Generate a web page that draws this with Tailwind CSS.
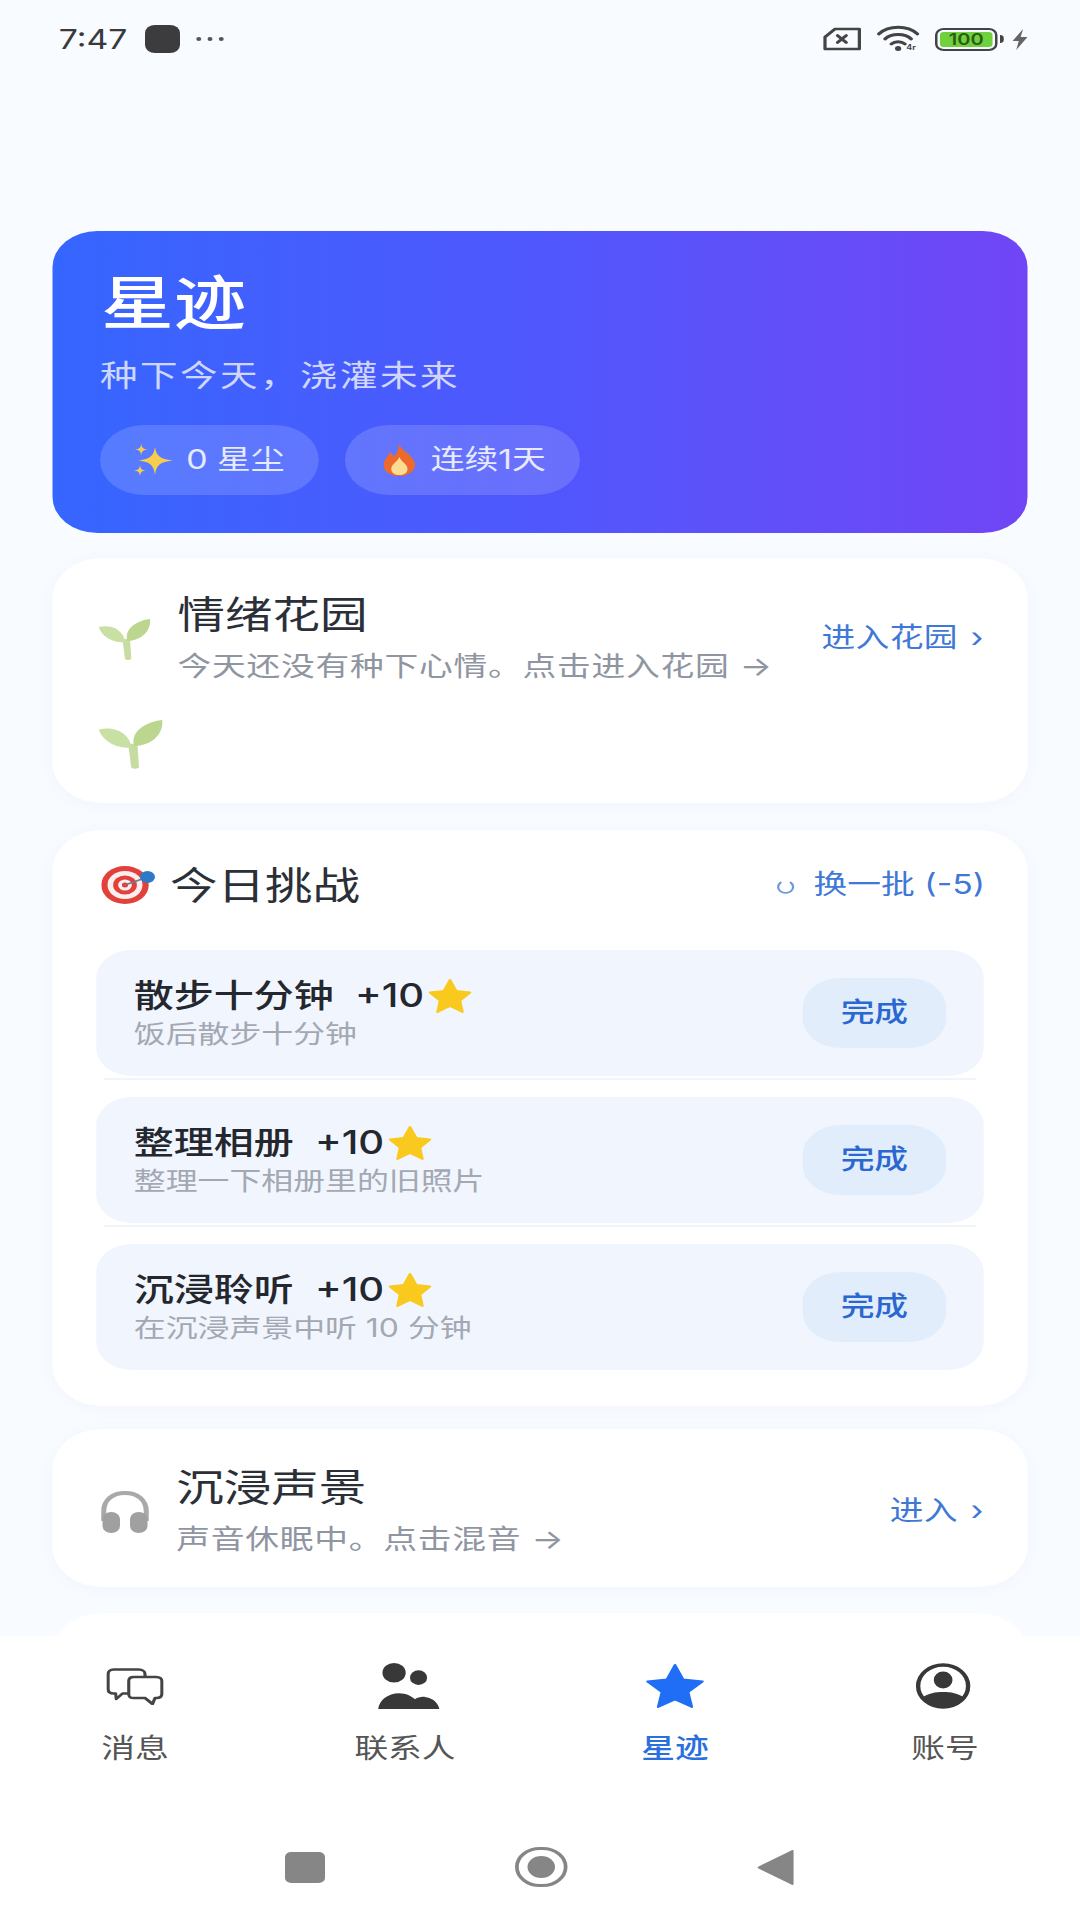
<!DOCTYPE html>
<html lang="zh-CN">
<head>
    <meta charset="UTF-8">
    <meta name="viewport" content="width=device-width, initial-scale=1.0">
    <title>星迹</title>
    <script src="https://cdn.jsdelivr.net/npm/@tailwindcss/browser@4"></script>
</head>
<body class="w-[1080px] h-[1920px] overflow-hidden bg-[#f8fbff]">
    <!-- the capture is a 864 wide phone screen stretched to 1080 -->
    <div class="w-[864px] h-[1920px] flex flex-col origin-top-left scale-x-[1.25] bg-[#f8fbff] font-['Inter','Noto_Sans_CJK_SC',sans-serif]">

        <!-- status bar -->
        <div class="h-[78px] shrink-0 flex items-center px-[47px] text-[#3a3a3a]">
            <span class="text-[27px] leading-none">7:47</span>
            <div class="ml-[14px] w-[28px] h-[28px] rounded-[8px] bg-[#3c3c3e]"></div>
            <div class="ml-[13px] flex gap-[5px]">
                <div class="w-[4px] h-[4px] rounded-full bg-[#555]"></div>
                <div class="w-[4px] h-[4px] rounded-full bg-[#555]"></div>
                <div class="w-[4px] h-[4px] rounded-full bg-[#555]"></div>
            </div>
            <div class="ml-auto mr-[-5px] flex items-center">
                <svg class="w-[31px] h-[24px]" viewBox="0 0 31 24" fill="none" stroke="#444" stroke-width="2.6" stroke-linejoin="round" stroke-linecap="round">
                    <path d="M10 2H29.5V22H2V10Z"/><path d="M12 8.5l7 7M19 8.5l-7 7"/>
                </svg>
                <svg class="ml-[12px] w-[35px] h-[28px]" viewBox="0 0 35 28" fill="none" stroke="#444" stroke-width="2.8" stroke-linecap="round">
                    <path d="M2 9C10 0 25 0 33 9"/><path d="M7 14C12 8 23 8 28 14"/><path d="M12 19C15 16 20 16 23 19"/>
                    <circle cx="17.500" cy="23.500" r="2.500" fill="#444" stroke="none"/>
                    <text x="24" y="25" font-size="7" font-weight="700" fill="#444" stroke="none">4r</text>
                </svg>
                <div class="ml-[12px] flex items-center">
                    <div class="w-[50px] h-[23px] rounded-[7px] border-[2.5px] border-[#444] p-[2px] flex">
                        <div class="flex-1 rounded-[3px] bg-[#6fd13c] flex items-center justify-center text-[16px] leading-none font-semibold text-[#2c5a17]">100</div>
                    </div>
                    <div class="ml-[2px] w-[3px] h-[8px] rounded-r-sm bg-[#444]"></div>
                </div>
                <svg class="ml-[7px] w-[12px] h-[21px]" viewBox="0 0 12 21" fill="#666">
                    <path d="M8.500 0L0 12H5L3 21L12 8H6.500Z"/>
                </svg>
            </div>
        </div>

        <main class="flex-1 min-h-0 overflow-hidden px-[42px] pt-[153px]">
            <!-- hero -->
            <section class="h-[302px] rounded-[36px] bg-linear-to-r from-[#3566ff] via-[#4f57fc] to-[#7045f6] pl-[38px] pt-[40px] text-white">
                <h1 class="text-[58px] leading-[64px] font-medium ml-[1px]">星迹</h1>
                <p class="mt-[20px] text-[30px] leading-[40px] tracking-[2px] text-white/75">种下今天，浇灌未来</p>
                <div class="mt-[30px] flex gap-[21px]">
                    <div class="h-[70px] pl-[27px] pr-[27px] rounded-full bg-white/15 flex items-center gap-[11px] text-[27px] text-white/85">
                        <svg class="w-[31px] h-[32px]" viewBox="0 0 31 32" fill="#f8cd4e">
                            <path d="M17 3C18 12 21 15 31 16.500C21 18 18 21 17 31C16 21 13 18 4 16.500C13 15 16 12 17 3Z"/>
                            <path d="M6 0C6.500 4 7.500 5 11 5.500C7.500 6 6.500 7 6 11C5.500 7 4.500 6 1 5.500C4.500 5 5.500 4 6 0Z"/>
                            <path d="M5 21C5.500 25 6 26 9.500 26.500C6 27 5.500 28 5 32C4.500 28 4 27 0 26.500C4 26 4.500 25 5 21Z"/>
                        </svg>
                        <span>0 星尘</span>
                    </div>
                    <div class="h-[70px] pl-[30px] pr-[27px] rounded-full bg-white/15 flex items-center gap-[12px] text-[27px] text-white/85">
                        <svg class="w-[27px] h-[34px]" viewBox="0 0 27 32">
                            <path d="M13 0C15 6 24 11 26 19C27 26 21 32 13.500 32C6 32 0 27 1 19C2 14 5 12 6 8C8 10 9 12 9 13C12 9 13 5 13 0Z" fill="#ee6a2b"/>
                            <path d="M13.500 13C15 18 20 20 20 25C20 29 17 31 13.500 31C10 31 7 29 7 25C7 20 12 18 13.500 13Z" fill="#fcdc92"/>
                        </svg>
                        <span>连续1天</span>
                    </div>
                </div>
            </section>

            <!-- garden -->
            <section class="mt-[25px] h-[245px] rounded-[40px] bg-white shadow-[0_2px_14px_rgba(205,222,250,0.15)] pl-[37px] pr-[34px] pt-[34px]">
                <div class="flex items-center">
                    <svg class="w-[42px] h-[42px] shrink-0 mt-[2px]" viewBox="0 0 42 42">
                        <path d="M19 20H25L26 40Q23 42 21 40Z" fill="#c6dca0"/>
                        <path d="M21 23C12 25 2 17 0 8C10 5 20 11 21 23Z" fill="#c9e0a4"/>
                        <path d="M23 22C20 12 28 2 41 0C42 10 36 21 23 22Z" fill="#bcd690"/>
                    </svg>
                    <div class="ml-[21px]">
                        <h2 class="text-[38px] leading-[44px] text-[#2b2f38]">情绪花园</h2>
                        <p class="mt-[13px] text-[27px] leading-[36px] tracking-[0.6px] text-[#8f95a1]">今天还没有种下心情。点击进入花园 →</p>
                    </div>
                    <a class="ml-auto mr-[1px] flex items-center text-[27px] tracking-[0.3px] text-[#3f78d6] whitespace-nowrap">进入花园<span class="ml-[10px]">›</span></a>
                </div>
                <svg class="mt-[35px] w-[52px] h-[50px]" viewBox="0 0 42 42" preserveAspectRatio="none">
                    <path d="M19 20H25L26 40Q23 42 21 40Z" fill="#c6dca0"/>
                    <path d="M21 23C12 25 2 17 0 8C10 5 20 11 21 23Z" fill="#c9e0a4"/>
                    <path d="M23 22C20 12 28 2 41 0C42 10 36 21 23 22Z" fill="#bcd690"/>
                </svg>
            </section>

            <!-- today's challenge -->
            <section class="mt-[27px] h-[576px] rounded-[40px] bg-white shadow-[0_2px_14px_rgba(205,222,250,0.15)] px-[35px] pt-[32px]">
                <div class="h-[46px] flex items-center pl-[4px]">
                    <svg class="w-[44px] h-[38px]" viewBox="0 0 44 38" preserveAspectRatio="none">
                        <circle cx="19" cy="19" r="19" fill="#e2403a"/>
                        <circle cx="19" cy="19" r="14" fill="#fbeeee"/>
                        <circle cx="19" cy="19" r="9.500" fill="#e2403a"/>
                        <circle cx="19" cy="19" r="5.500" fill="#fbeeee"/>
                        <circle cx="19" cy="19" r="2.500" fill="#e2403a"/>
                        <path d="M19 19L35 12" stroke="#6b7a8c" stroke-width="1.500"/>
                        <circle cx="37" cy="11" r="6" fill="#2f79c9"/>
                    </svg>
                    <h2 class="ml-[11px] text-[38px] leading-[46px] text-[#2b2f38]">今日挑战</h2>
                    <a class="ml-auto mr-[-1px] flex items-center text-[27px] text-[#3f78d6] whitespace-nowrap">
                        <svg class="w-[15px] h-[15px] mt-[5px] mr-[15px]" viewBox="0 0 15 15" fill="none" stroke="#6f97dd" stroke-width="1.800" stroke-linecap="round">
                            <path d="M3.500 2.500A6 6 0 1 0 11.500 2.500"/>
                        </svg>
                        换一批 (-5)
                    </a>
                </div>

                <div class="mt-[42px]">
                    <div class="h-[126px] rounded-[28px] bg-[#f1f6fe] pl-[30px] pr-[30px] flex items-center">
                        <div>
                            <div class="h-[38px] mt-[1px] flex items-center text-[32px] font-medium text-[#24272e]">
                                <span>散步十分钟</span><span class="ml-[17px]">+10</span>
                                <svg class="ml-[3px] w-[36px] h-[36px]" viewBox="0 0 36 36"><path d="M18 2L23 13L34 14.500L26 22.500L28 34L18 28L8 34L10 22.500L2 14.500L13 13Z" fill="#f9c91e" stroke="#f9c91e" stroke-width="2" stroke-linejoin="round"/></svg>
                            </div>
                            <p class="mt-[2px] text-[25.5px] leading-[34px] text-[#a3a8b3]">饭后散步十分钟</p>
                        </div>
                        <button class="ml-auto w-[115px] h-[70px] rounded-[30px] bg-[#e1edfb] text-[27px] font-medium text-[#2a67d1]">完成</button>
                    </div>
                    <div class="mt-[2px] mb-[17px] mx-[6px] h-[2px] bg-[#f1f5fa]"></div>

                    <div class="h-[126px] rounded-[28px] bg-[#f1f6fe] pl-[30px] pr-[30px] flex items-center">
                        <div>
                            <div class="h-[38px] mt-[1px] flex items-center text-[32px] font-medium text-[#24272e]">
                                <span>整理相册</span><span class="ml-[17px]">+10</span>
                                <svg class="ml-[3px] w-[36px] h-[36px]" viewBox="0 0 36 36"><path d="M18 2L23 13L34 14.500L26 22.500L28 34L18 28L8 34L10 22.500L2 14.500L13 13Z" fill="#f9c91e" stroke="#f9c91e" stroke-width="2" stroke-linejoin="round"/></svg>
                            </div>
                            <p class="mt-[2px] text-[25.5px] leading-[34px] text-[#a3a8b3]">整理一下相册里的旧照片</p>
                        </div>
                        <button class="ml-auto w-[115px] h-[70px] rounded-[30px] bg-[#e1edfb] text-[27px] font-medium text-[#2a67d1]">完成</button>
                    </div>
                    <div class="mt-[2px] mb-[17px] mx-[6px] h-[2px] bg-[#f1f5fa]"></div>

                    <div class="h-[126px] rounded-[28px] bg-[#f1f6fe] pl-[30px] pr-[30px] flex items-center">
                        <div>
                            <div class="h-[38px] mt-[1px] flex items-center text-[32px] font-medium text-[#24272e]">
                                <span>沉浸聆听</span><span class="ml-[17px]">+10</span>
                                <svg class="ml-[3px] w-[36px] h-[36px]" viewBox="0 0 36 36"><path d="M18 2L23 13L34 14.500L26 22.500L28 34L18 28L8 34L10 22.500L2 14.500L13 13Z" fill="#f9c91e" stroke="#f9c91e" stroke-width="2" stroke-linejoin="round"/></svg>
                            </div>
                            <p class="mt-[2px] text-[25.5px] leading-[34px] text-[#a3a8b3]">在沉浸声景中听 10 分钟</p>
                        </div>
                        <button class="ml-auto w-[115px] h-[70px] rounded-[30px] bg-[#e1edfb] text-[27px] font-medium text-[#2a67d1]">完成</button>
                    </div>
                </div>
            </section>

            <!-- soundscape -->
            <section class="mt-[23px] h-[158px] rounded-[40px] bg-white shadow-[0_2px_14px_rgba(205,222,250,0.15)] pl-[37px] pr-[34px] pt-[36px]">
                <div class="flex items-center">
                    <svg class="w-[42px] h-[42px] shrink-0" viewBox="0 0 42 42" fill="none">
                        <path d="M4 30V20C4 9 11 2 21 2C31 2 38 9 38 20V30" stroke="#a9a9a9" stroke-width="4"/>
                        <rect x="3" y="21" width="14" height="21" rx="7" fill="#a0a0a0"/>
                        <rect x="25" y="21" width="14" height="21" rx="7" fill="#a0a0a0"/>
                    </svg>
                    <div class="ml-[20px]">
                        <h2 class="text-[38px] leading-[44px] text-[#2b2f38]">沉浸声景</h2>
                        <p class="mt-[13px] text-[27px] leading-[36px] tracking-[0.6px] text-[#8f95a1]">声音休眠中。点击混音 →</p>
                    </div>
                    <a class="ml-auto mr-[1px] flex items-center text-[27px] tracking-[0.3px] text-[#3f78d6] whitespace-nowrap">进入<span class="ml-[10px]">›</span></a>
                </div>
            </section>

            <!-- next card, cut off by the tab bar -->
            <section class="mt-[26px] h-[200px] rounded-[40px] bg-white"></section>
        </main>

        <!-- tab bar -->
        <nav class="h-[284px] shrink-0 bg-white">
            <div class="grid grid-cols-4 pt-[27px] text-[27px] leading-[34px] text-[#555]">
                <div class="flex flex-col items-center">
                    <div class="h-[46px] flex items-center">
                        <svg class="w-[46px] h-[37px]" viewBox="0 0 46 37" fill="#fff" stroke="#444" stroke-width="2.500" stroke-linejoin="round">
                            <path d="M6 1.500H26C29 1.500 31 3.500 31 6V21C31 24 29 25.500 26 25.500H13L8 31L7.500 25.500H6C3 25.500 1.500 24 1.500 21V6C1.500 3.500 3 1.500 6 1.500Z"/>
                            <path d="M22 9H40C43 9 44.500 11 44.500 13V26C44.500 29 43 30 40 30H39L37 36L31 30H22C19 30 18 29 18 26V13C18 11 19 9 22 9Z"/>
                        </svg>
                    </div>
                    <span class="mt-[23px]">消息</span>
                </div>
                <div class="flex flex-col items-center">
                    <svg class="ml-[6px] w-[50px] h-[46px]" viewBox="0 0 50 47" fill="#383838">
                        <ellipse cx="13" cy="10" rx="9.500" ry="10"/>
                        <ellipse cx="33" cy="15" rx="7" ry="7.500"/>
                        <path d="M0 47C1 38 8 31 17 31C23 31 27 34 30 37C33 35 36 34 39 35C45 36 49 41 50 47Z"/>
                    </svg>
                    <span class="mt-[23px]">联系人</span>
                </div>
                <div class="flex flex-col items-center text-[#2a6fe0] font-medium">
                    <svg class="w-[48px] h-[46px]" viewBox="0 0 48 46">
                        <path d="M24 2L30.500 16.500L46 18.500L34.500 29L37.500 44L24 36.500L10.500 44L13.500 29L2 18.500L17.500 16.500Z" fill="#1f6ef5" stroke="#1f6ef5" stroke-width="2" stroke-linejoin="round"/>
                    </svg>
                    <span class="mt-[23px]">星迹</span>
                </div>
                <div class="flex flex-col items-center">
                    <svg class="mr-[3px] w-[45px] h-[46px]" viewBox="0 0 44 46" fill="#383838">
                        <ellipse cx="22" cy="23" rx="20" ry="21" fill="none" stroke="#383838" stroke-width="3.500"/>
                        <ellipse cx="22" cy="17" rx="7.500" ry="8.500"/>
                        <path d="M5 35C10 30 16 29 22 29C28 29 34 30 39 35C35 41 29 45 22 45C15 45 9 41 5 35Z"/>
                    </svg>
                    <span class="mt-[23px]">账号</span>
                </div>
            </div>

            <!-- system navigation -->
            <div class="mt-[81px] pr-[1px] h-[40px] flex items-center justify-center gap-[152px]">
                <div class="w-[32px] h-[31px] rounded-[5px] bg-[#868686]"></div>
                <div class="w-[42px] h-[40px] rounded-full border-[3px] border-[#868686] flex items-center justify-center">
                    <div class="w-[22px] h-[22px] rounded-full bg-[#868686]"></div>
                </div>
                <svg class="w-[29px] h-[35px]" viewBox="0 0 29 35" fill="#868686" stroke="#868686" stroke-width="2" stroke-linejoin="round">
                    <path d="M28 1V34L1 17.500Z"/>
                </svg>
            </div>
        </nav>
    </div>
</body>
</html>
